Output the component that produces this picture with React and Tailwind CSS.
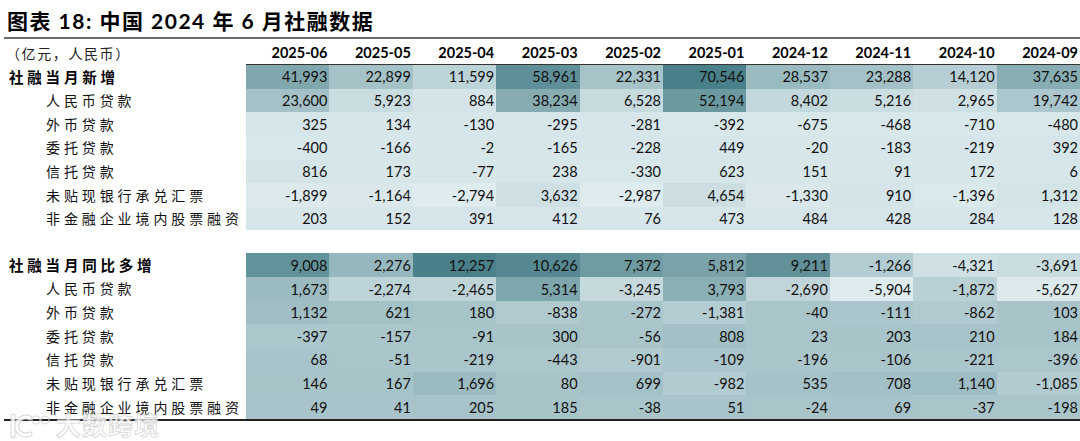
import React from "react";

const COLS = ["2025-06","2025-05","2025-04","2025-03","2025-02","2025-01","2024-12","2024-11","2024-10","2024-09"];

const BLOCK1 = [
  ["社融当月新增", true, [41993, 22899, 11599, 58961, 22331, 70546, 28537, 23288, 14120, 37635]],
  ["人民币贷款", false, [23600, 5923, 884, 38234, 6528, 52194, 8402, 5216, 2965, 19742]],
  ["外币贷款", false, [325, 134, -130, -295, -281, -392, -675, -468, -710, -480]],
  ["委托贷款", false, [-400, -166, -2, -165, -228, 449, -20, -183, -219, 392]],
  ["信托贷款", false, [816, 173, -77, 238, -330, 623, 151, 91, 172, 6]],
  ["未贴现银行承兑汇票", false, [-1899, -1164, -2794, 3632, -2987, 4654, -1330, 910, -1396, 1312]],
  ["非金融企业境内股票融资", false, [203, 152, 391, 412, 76, 473, 484, 428, 284, 128]],
];

const BLOCK2 = [
  ["社融当月同比多增", true, [9008, 2276, 12257, 10626, 7372, 5812, 9211, -1266, -4321, -3691]],
  ["人民币贷款", false, [1673, -2274, -2465, 5314, -3245, 3793, -2690, -5904, -1872, -5627]],
  ["外币贷款", false, [1132, 621, 180, -838, -272, -1381, -40, -111, -862, 103]],
  ["委托贷款", false, [-397, -157, -91, 300, -56, 808, 23, 203, 210, 184]],
  ["信托贷款", false, [68, -51, -219, -443, -901, -109, -196, -106, -221, -396]],
  ["未贴现银行承兑汇票", false, [146, 167, 1696, 80, 699, -982, 535, 708, 1140, -1085]],
  ["非金融企业境内股票融资", false, [49, 41, 205, 185, -38, 51, -24, 69, -37, -198]],
];

const LIGHT = [223, 236, 239];
const DARK = [74, 128, 137];

function cellColor(v, min, max) {
  const t = Math.pow((v - min) / (max - min), 0.9);
  const c = LIGHT.map((l, i) => Math.round(l + (DARK[i] - l) * t));
  return `rgb(${c[0]},${c[1]},${c[2]})`;
}

const fmt = (v) => v.toLocaleString("en-US");

function Block({ rows }) {
  const all = rows.flatMap((r) => r[2]);
  const min = Math.min(...all);
  const max = Math.max(...all);
  return (
    <div className="flex flex-col">
      {rows.map(([label, bold, vals], ri) => (
        <div key={ri} className="grid grid-cols-[246px_repeat(10,1fr)] h-[23.65px]">
          <div
            className={
              bold
                ? "flex items-center pl-[9px] font-bold text-[14.5px] tracking-[3.8px] text-black font-['Noto_Sans_CJK_SC',sans-serif]"
                : "flex items-center pl-[46px] text-[14px] tracking-[3.9px] text-[#111] font-['Noto_Sans_CJK_SC',sans-serif]"
            }
          >
            {label}
          </div>
          {vals.map((v, ci) => (
            <div
              key={ci}
              className="flex items-center justify-end pr-[2px] pt-[1px] text-[14.5px] text-[#111] font-['Lato',sans-serif]"
              style={{ backgroundColor: cellColor(v, min, max) }}
            >
              {fmt(v)}
            </div>
          ))}
        </div>
      ))}
    </div>
  );
}

export default function App() {
  return (
    <div className="relative w-[1080px] h-[441px] bg-white overflow-hidden">
      <div className="h-[37px] flex items-center pl-[7px] pt-[4px] text-[21px] font-bold tracking-[1.5px] text-black font-['Lato','Noto_Sans_CJK_SC',sans-serif]">
        图表 18: 中国 2024 年 6 月社融数据
      </div>
      <div className="ml-[4px] h-[2px] bg-[#6b6b6b]" />
      <div className="grid grid-cols-[246px_repeat(10,1fr)] h-[26px]">
        <div className="flex items-center pl-[6px] pt-[2px] text-[14px] tracking-[1.6px] text-[#222] font-['Noto_Sans_CJK_SC',sans-serif]">
          （亿元，人民币）
        </div>
        {COLS.map((c) => (
          <div
            key={c}
            className="flex items-center justify-end pr-[2px] pt-[2px] text-[14.5px] font-bold text-black font-['Lato',sans-serif] border-b border-[#333]"
          >
            {c}
          </div>
        ))}
      </div>
      <Block rows={BLOCK1} />
      <div className="h-[23px]" />
      <Block rows={BLOCK2} />
      <div className="ml-[4px] h-[2px] bg-[#222]" />

      <div className="absolute left-[8px] top-[406px] flex items-center gap-[4px] opacity-85 pointer-events-none">
        <svg width="44" height="30" viewBox="0 0 44 30">
          <g fill="none" stroke="#cfcfcf" strokeWidth="5" strokeLinecap="round">
            <path d="M5 6 L5 26" />
            <path d="M22 8 A9 9 0 1 0 22 24" />
          </g>
          <g fill="none" stroke="#ffffff" strokeWidth="3" strokeLinecap="round">
            <path d="M5 6 L5 26" />
            <path d="M22 8 A9 9 0 1 0 22 24" />
          </g>
          <g fill="none" stroke="#d4d4d4" strokeWidth="1.2">
            <circle cx="28" cy="10" r="4" />
            <circle cx="37" cy="10" r="4" />
          </g>
        </svg>
        <span className="text-[25px] font-bold text-white [-webkit-text-stroke:0.8px_#d0d0d0] tracking-[1px] font-['Noto_Sans_CJK_SC',sans-serif]">
          大数跨境
        </span>
      </div>
    </div>
  );
}
